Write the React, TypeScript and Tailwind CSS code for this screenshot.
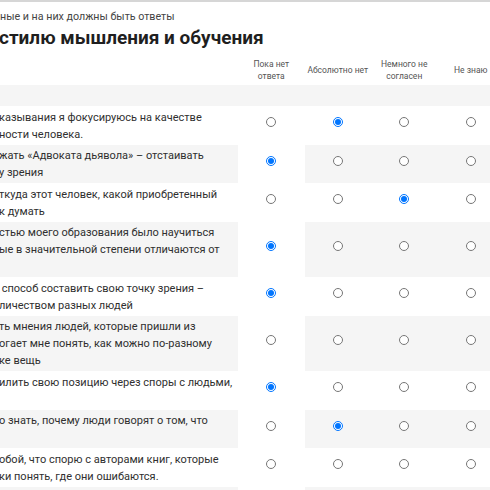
import React from 'react';

const columns: React.ReactNode[] = [
  <>Пока нет<br />ответа</>,
  <>Абсолютно нет</>,
  <>Немного не<br />согласен</>,
  <>Не знаю</>,
];

type Row = { lines: string[]; checked: number | null };

// the statement column is wider than the window, so only the right part of each line shows
const rows: Row[] = [
  { lines: ['казывания я фокусируюсь на качестве', 'ности человека.'], checked: 1 },
  { lines: ['жать «Адвоката дьявола» – отстаивать', 'у зрения'], checked: 0 },
  { lines: ['ткуда этот человек, какой приобретенный', 'к думать'], checked: 2 },
  { lines: ['стью моего образования было научиться', 'ые в значительной степени отличаются от', ''], checked: 0 },
  { lines: [' способ составить свою точку зрения –', 'личеством разных людей'], checked: 0 },
  { lines: ['ть мнения людей, которые пришли из', 'огает мне понять, как можно по-разному', 'ке вещь'], checked: null },
  { lines: ['илить свою позицию через споры с людьми,', ''], checked: 0 },
  { lines: ['о знать, почему люди говорят о том, что', ''], checked: 1 },
  { lines: ['обой, что спорю с авторами книг, которые', 'ки понять, где они ошибаются.'], checked: null },
  { lines: ['', ''], checked: null },
];

function Radio({ name, checked }: { name: string; checked: boolean }) {
  return (
    <input
      type="radio"
      name={name}
      defaultChecked={checked}
      className="w-[10px] h-[10px] m-0 mb-[6px] shrink-0"
    />
  );
}

function SurveyRow({ row, index }: { row: Row; index: number }) {
  const striped = index % 2 === 1;
  const bg = striped ? 'bg-[#f5f5f5]' : 'bg-white';
  return (
    <div className="flex w-[504px]">
      <div className={`w-[238px] shrink-0 pt-[2.5px] pb-[2px] pr-1 overflow-hidden text-[11px] leading-[17px] text-[#2f2f2f] ${bg}`}>
        {row.lines.map((line, i) => (
          <span key={i} className="block whitespace-pre -ml-px">
            {line || '\u00a0'}
          </span>
        ))}
      </div>
      {columns.map((_, c) => (
        <div
          key={c}
          className={`w-[66.5px] shrink-0 flex items-center justify-center ${c === 0 ? 'bg-white' : bg}`}
        >
          <Radio name={`q${index}`} checked={row.checked === c} />
        </div>
      ))}
    </div>
  );
}

export default function App() {
  return (
    <div className="w-[490px] h-[490px] overflow-hidden bg-white border-t-2 border-[#d6d6d6] font-['Roboto','Liberation_Sans',sans-serif]">
      {/* Section heading, cut off on the left */}
      <div className="pt-[7px] whitespace-nowrap">
        <p className="text-[10.7px] leading-[16px] text-[#444]">ные и на них должны быть ответы</p>
        <h2 className="mt-px -ml-px text-[19px] leading-[24px] font-bold text-[#1f1f1f]">
          стилю мышления и обучения
        </h2>
      </div>

      {/* Answer scale header */}
      <div className="flex w-[504px] h-[35px] pt-[4px] items-center">
        <div className="w-[238px] shrink-0" />
        {columns.map((label, i) => (
          <div key={i} className="w-[66.5px] shrink-0 text-center text-[8.5px] leading-[12px] text-[#555] whitespace-nowrap">
            {label}
          </div>
        ))}
      </div>
      <div className="h-[21px] bg-[#f5f5f5]" />

      {rows.map((row, i) => (
        <SurveyRow key={i} row={row} index={i} />
      ))}
    </div>
  );
}
